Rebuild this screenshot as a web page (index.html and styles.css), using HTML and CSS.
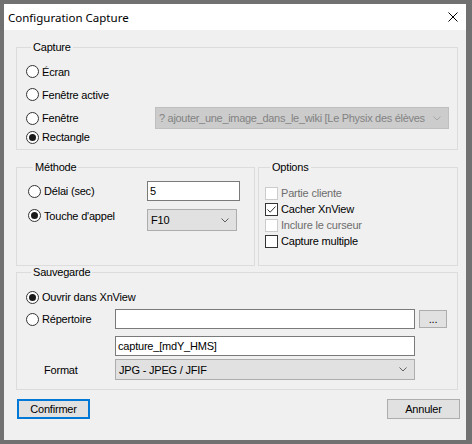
FILE: index.html
```html
<!DOCTYPE html>
<html lang="fr">
  <head>
    <meta charset="UTF-8" />
    <title>Configuration Capture</title>
    <link rel="stylesheet" href="styles.css">
  </head>
  <body>
    <!-- Dialog window -->
    <div class="window">
      <header class="titlebar">
        <span class="title">Configuration Capture</span>
        <svg class="close" width="10" height="10" viewBox="0 0 10 10">
          <path d="M0.5 0.5 L9.5 9.5 M9.5 0.5 L0.5 9.5" stroke="#000" stroke-width="1" fill="none" />
        </svg>
      </header>

      <main class="content">
        <!-- Capture mode -->
        <fieldset class="group capture">
          <legend>Capture</legend>
          <div class="row r1"><span class="radio"></span><span class="label">Écran</span></div>
          <div class="row r2"><span class="radio"></span><span class="label">Fenêtre active</span></div>
          <div class="row r3">
            <span class="radio"></span><span class="label">Fenêtre</span>
            <div class="combo disabled window-list">
              <span class="value">? ajouter_une_image_dans_le_wiki [Le Physix des élèves</span>
              <svg class="chevron" width="8" height="5" viewBox="0 0 8 5"><path d="M0.5 0.5 L4 4 L7.5 0.5" fill="none" stroke="currentColor" /></svg>
            </div>
          </div>
          <div class="row r4"><span class="radio checked"></span><span class="label">Rectangle</span></div>
        </fieldset>

        <div class="pair">
          <!-- Trigger method -->
          <fieldset class="group half method">
            <legend>Méthode</legend>
            <div class="row m1">
              <div class="lead"><span class="radio"></span><span class="label">Délai (sec)</span></div>
              <div class="textbox delay">5</div>
            </div>
            <div class="row m2">
              <div class="lead"><span class="radio checked"></span><span class="label">Touche d'appel</span></div>
              <div class="combo key">
                <span class="value">F10</span>
                <svg class="chevron" width="8" height="5" viewBox="0 0 8 5"><path d="M0.5 0.5 L4 4 L7.5 0.5" fill="none" stroke="currentColor" /></svg>
              </div>
            </div>
          </fieldset>

          <!-- Options -->
          <fieldset class="group half options">
            <legend>Options</legend>
            <div class="check disabled"><span class="box"></span><span class="label">Partie cliente</span></div>
            <div class="check">
              <span class="box">
                <svg width="11" height="11" viewBox="0 0 11 11"><path d="M1.5 5.5 L4.2 8.2 L9.5 2.5" fill="none" stroke="#333" stroke-width="1" /></svg>
              </span>
              <span class="label">Cacher XnView</span>
            </div>
            <div class="check disabled"><span class="box"></span><span class="label">Inclure le curseur</span></div>
            <div class="check"><span class="box"></span><span class="label">Capture multiple</span></div>
          </fieldset>
        </div>

        <!-- Output -->
        <fieldset class="group save">
          <legend>Sauvegarde</legend>
          <div class="row s1"><span class="radio checked"></span><span class="label">Ouvrir dans XnView</span></div>
          <div class="row s2">
            <div class="col"><span class="radio"></span><span class="label">Répertoire</span></div>
            <div class="textbox wide"></div>
            <button class="btn browse">...</button>
          </div>
          <div class="row s3">
            <div class="col"></div>
            <div class="textbox wide">capture_[mdY_HMS]</div>
          </div>
          <div class="row s4">
            <div class="col"><span class="label fmt">Format</span></div>
            <div class="combo wide">
              <span class="value">JPG - JPEG / JFIF</span>
              <svg class="chevron" width="8" height="5" viewBox="0 0 8 5"><path d="M0.5 0.5 L4 4 L7.5 0.5" fill="none" stroke="currentColor" /></svg>
            </div>
          </div>
        </fieldset>

        <div class="actions">
          <button class="btn action default">Confirmer</button>
          <button class="btn action">Annuler</button>
        </div>
      </main>
    </div>
  </body>
</html>
```

FILE: styles.css
```css
/* Desktop behind the dialog */
* {
  box-sizing: border-box;
}
body {
  margin: 0;
  padding: 4px 6px 4px 4px;
  background: #717171;
  font-family: "Liberation Sans", Arial, sans-serif;
  font-size: 11px;
  letter-spacing: -0.2px;
  color: #000;
}
.window {
  width: 462px;
  height: 436px;
  display: flex;
  flex-direction: column;
  background: #f0f0f0;
}
/* Title bar */
.titlebar {
  height: 26px;
  flex: none;
  background: #fff;
  display: flex;
  align-items: center;
  padding: 0 8px 0 4px;
}
.title {
  font-family: "Noto Sans", sans-serif;
  font-size: 11.5px;
  letter-spacing: 0;
  flex: 1;
}
/* Client area */
.content {
  flex: 1;
  padding: 11px 8px 0 12px;
}
.group {
  margin: 0;
  padding: 0;
  border: 1px solid #dcdcdc;
  min-inline-size: 0;
}
.group legend {
  margin-left: 5px;
  padding: 0 2px;
  line-height: 13px;
}
.row {
  display: flex;
  align-items: center;
}
.label {
  white-space: nowrap;
}
.radio {
  width: 13px;
  height: 13px;
  border: 1px solid #333;
  border-radius: 50%;
  background: #fff;
  margin-right: 3px;
  flex: none;
  display: flex;
  align-items: center;
  justify-content: center;
}
.radio.checked::after {
  content: "";
  width: 7px;
  height: 7px;
  border-radius: 50%;
  background: #1a1a1a;
}
/* Capture group */
.capture {
  padding: 6px 8px 4px 9px;
}
.capture .r1 { height: 23px; }
.capture .r2 { height: 23px; }
.capture .r3 { height: 22px; margin-top: 1px; }
.capture .r4 { height: 16px; }
.combo {
  height: 22px;
  display: flex;
  align-items: center;
  justify-content: space-between;
  background: #e1e1e1;
  border: 1px solid #adadad;
  padding: 0 7px 0 3px;
  color: #000;
}
.combo .chevron {
  color: #606060;
  flex: none;
}
.combo.disabled {
  background: #cccccc;
  border-color: #bfbfbf;
  color: #838383;
}
.combo.disabled .chevron {
  color: #a6a6a6;
}
.window-list {
  width: 294px;
  margin-left: auto;
}
.window-list .value {
  overflow: hidden;
  white-space: nowrap;
  letter-spacing: -0.3px;
}
/* Method and options */
.pair {
  display: flex;
  gap: 3px;
  margin-top: 11px;
}
.half {
  height: 105px;
}
.method {
  width: 239px;
  padding: 7px 0 0 11px;
}
.method .lead {
  width: 119px;
  display: flex;
  align-items: center;
  flex: none;
}
.method .m1 { height: 20px; }
.method .m2 {
  margin-top: 8px;
  align-items: flex-start;
}
.method .m2 .lead {
  height: 13px;
}
.textbox {
  height: 20px;
  background: #fff;
  border: 1px solid #7a7a7a;
  padding: 0 2px;
  display: flex;
  align-items: center;
}
.delay {
  width: 93px;
}
.key {
  width: 90px;
  height: 22px;
  padding-left: 3px;
}
.options {
  width: 200px;
  padding: 11px 0 0 6px;
}
.check {
  height: 16px;
  display: flex;
  align-items: center;
}
.check .box {
  width: 13px;
  height: 13px;
  border: 1px solid #333;
  background: #fff;
  margin-right: 3px;
  display: flex;
  align-items: center;
  justify-content: center;
}
.check.disabled .box {
  border-color: #cccccc;
}
.check.disabled .label {
  color: #6d6d6d;
}
/* Output group */
.save {
  padding: 10px 8px 9px 9px;
}
.save .s1 { height: 16px; }
.save .s2 { height: 20px; margin-top: 4px; }
.save .s3 { height: 20px; margin-top: 7px; }
.save .s4 { height: 21px; margin-top: 3px; }
.save .col {
  width: 89px;
  flex: none;
  display: flex;
  align-items: center;
}
.fmt {
  padding-left: 18px;
}
.wide {
  width: 300px;
}
.save .combo.wide {
  height: 21px;
}
.btn {
  font-family: inherit;
  font-size: 11px;
  letter-spacing: inherit;
  color: #000;
  background: #e1e1e1;
  border: 1px solid #adadad;
  padding: 0;
}
.browse {
  width: 28px;
  height: 18px;
  margin-left: 4px;
}
/* Dialog buttons */
.actions {
  display: flex;
  justify-content: space-between;
  margin: 9px -2px 0 1px;
}
.action {
  width: 73px;
  height: 20px;
}
.action.default {
  border: 2px solid #0078d7;
}
```
